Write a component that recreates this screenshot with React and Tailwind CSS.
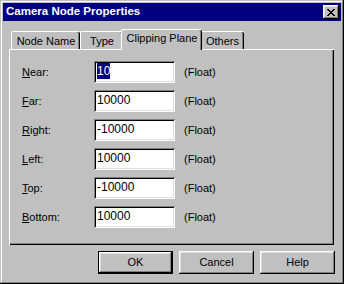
import React from 'react';

const raised =
  'shadow-[inset_-1px_-1px_0_#000,inset_1px_1px_0_#fff,inset_-2px_-2px_0_#808080,inset_2px_2px_0_#dfdfdf]';
const sunken =
  'shadow-[inset_1px_1px_0_#808080,inset_-1px_-1px_0_#fff,inset_2px_2px_0_#000,inset_-2px_-2px_0_#dfdfdf]';

const fields = [
  { key: 'N', rest: 'ear:', value: '10', selected: true },
  { key: 'F', rest: 'ar:', value: '10000' },
  { key: 'R', rest: 'ight:', value: '-10000' },
  { key: 'L', rest: 'eft:', value: '10000' },
  { key: 'T', rest: 'op:', value: '-10000' },
  { key: 'B', rest: 'ottom:', value: '10000' },
];

function CloseGlyph() {
  // 8x7 pixel X, as on the Win95 caption button
  return (
    <svg width="8" height="7" viewBox="0 0 8 7" shapeRendering="crispEdges">
      <path
        fill="#000"
        d="M0 0h2v1H0zM6 0h2v1H6zM1 1h2v1H1zM5 1h2v1H5zM2 2h4v1H2zM3 3h2v1H3zM2 4h4v1H2zM1 5h2v1H1zM5 5h2v1H5zM0 6h2v1H0zM6 6h2v1H6z"
      />
    </svg>
  );
}

function Tab({ label, width, selected }) {
  if (selected) {
    return (
      <div
        className={`relative z-10 mx-[-2px] mb-[-1px] h-[21px] bg-[#c0c0c0] border-t border-l border-white rounded-tl-[2px] rounded-tr-[2px] shadow-[inset_-1px_0_0_#000,inset_-2px_0_0_#808080] flex items-start justify-center pt-[3px] ${width}`}
      >
        {label}
      </div>
    );
  }
  return (
    <div
      className={`h-[18px] border-t border-l border-white rounded-tl-[2px] rounded-tr-[2px] shadow-[inset_-1px_0_0_#000,inset_-2px_0_0_#808080] flex items-center justify-center pt-[1px] ${width}`}
    >
      {label}
    </div>
  );
}

function Button({ label, isDefault }) {
  return (
    <div className={`w-[75px] h-[23px] ${isDefault ? 'border border-black' : ''}`}>
      <div className={`w-full h-full flex items-center justify-center bg-[#c0c0c0] ${raised}`}>
        {label}
      </div>
    </div>
  );
}

export default function App() {
  return (
    <div className="w-[344px] h-[284px] bg-[#c0c0c0] p-[3px] text-black text-[11px] leading-none font-['Liberation_Sans',Arial,sans-serif] shadow-[inset_-1px_-1px_0_#000,inset_1px_1px_0_#c0c0c0,inset_-2px_-2px_0_#808080,inset_2px_2px_0_#fff]">
      {/* Title bar */}
      <div className="h-[18px] bg-[#000080] flex items-center justify-between pl-[3px] pr-[2px]">
        <span className="text-white font-bold text-[11.5px]">Camera Node Properties</span>
        <div className={`w-[16px] h-[14px] bg-[#c0c0c0] flex items-center justify-center ${raised}`}>
          <CloseGlyph />
        </div>
      </div>

      {/* Tabs */}
      <div className="ml-[6px] w-[325px]">
        <div className="mt-[8px] h-[20px] flex items-end pl-[2px]">
          <Tab label="Node Name" width="w-[69px]" />
          <Tab label="Type" width="w-[43px]" />
          <Tab label="Clipping Plane" width="w-[81px]" selected />
          <Tab label="Others" width="w-[44px]" />
        </div>

        {/* Tab panel */}
        <div className="h-[196px] border-t border-l border-white shadow-[inset_-1px_-1px_0_#000,inset_-2px_-2px_0_#808080] pt-[11px] pl-[12px]">
          <div className="flex flex-col gap-[7px]">
            {fields.map((f) => (
              <div key={f.key} className="h-[22px] flex items-center">
                <div className="w-[72px]">
                  <u>{f.key}</u>
                  {f.rest}
                </div>
                <div className={`w-[81px] h-[22px] bg-white flex items-center pl-[3px] pb-[3px] ${sunken}`}>
                  {f.selected ? (
                    <span className="bg-[#000080] text-white py-[2px] text-[12px]">{f.value}</span>
                  ) : (
                    <span className="text-[12px]">{f.value}</span>
                  )}
                </div>
                <div className="ml-[9px]">(Float)</div>
              </div>
            ))}
          </div>
        </div>
      </div>

      {/* Buttons */}
      <div className="mt-[6px] flex justify-end gap-[6px] pr-[6px]">
        <Button label="OK" isDefault />
        <Button label="Cancel" />
        <Button label="Help" />
      </div>
    </div>
  );
}
